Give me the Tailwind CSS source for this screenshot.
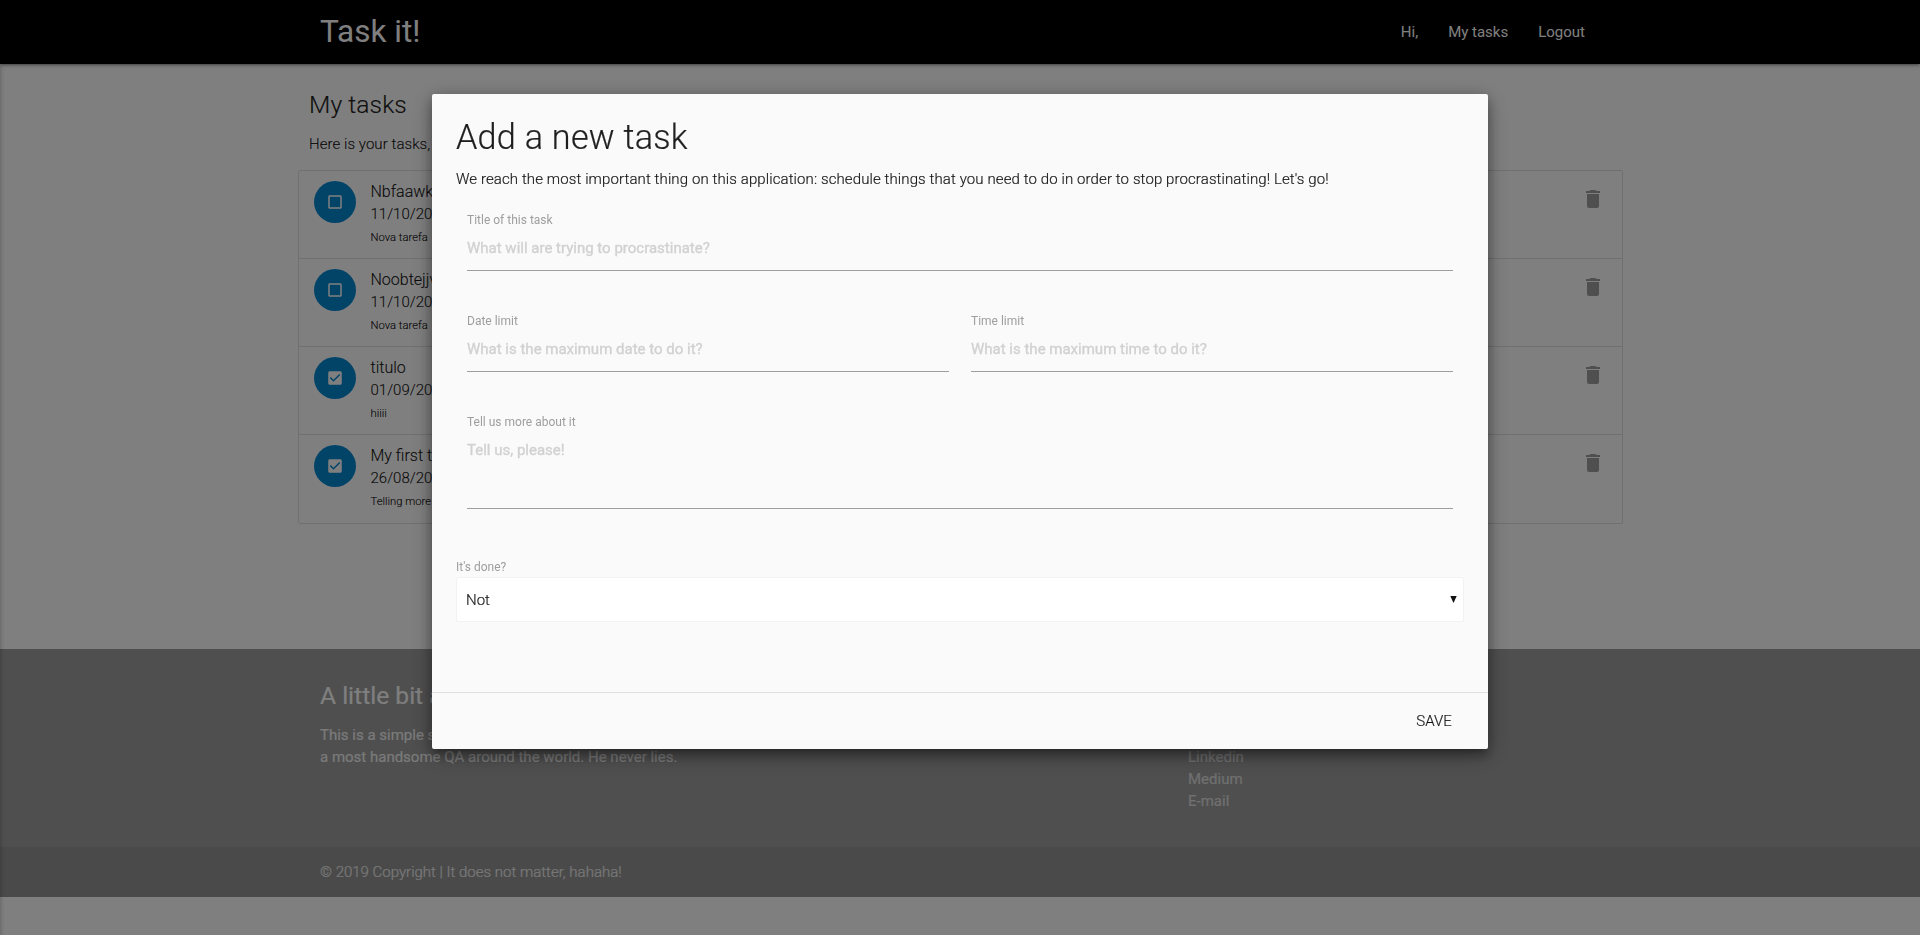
<!DOCTYPE html>
<html lang="en">
<head>
<meta charset="utf-8">
<title>Task it!</title>
<script src="https://cdn.jsdelivr.net/npm/@tailwindcss/browser@4"></script>
</head>
<body class="bg-white font-[Roboto,sans-serif] text-[15px] leading-[22px] text-black/87 h-[935px] overflow-hidden">

<svg class="hidden">
  <symbol id="box" viewBox="0 0 24 24"><path d="M19 5v14H5V5h14m0-2H5c-1.1 0-2 .9-2 2v14c0 1.1.9 2 2 2h14c1.1 0 2-.9 2-2V5c0-1.1-.9-2-2-2z"/></symbol>
  <symbol id="box-checked" viewBox="0 0 24 24"><path d="M19 3H5c-1.11 0-2 .9-2 2v14c0 1.1.89 2 2 2h14c1.11 0 2-.9 2-2V5c0-1.1-.89-2-2-2zm-9 14l-5-5 1.41-1.41L10 14.17l7.59-7.59L19 8l-9 9z"/></symbol>
  <symbol id="trash" viewBox="0 0 24 24"><path d="M6 19c0 1.100.9 2 2 2h8c1.100 0 2-.9 2-2V7H6v12zM19 4h-3.500l-1-1h-5l-1 1H5v2h14V4z"/></symbol>
</svg>

<header class="relative h-16 bg-black text-white shadow-[0_2px_2px_0_rgba(0,0,0,0.14),0_3px_1px_-2px_rgba(0,0,0,0.12),0_1px_5px_0_rgba(0,0,0,0.2)]">
  <div class="h-full pl-80 pr-[335px] flex items-center justify-between">
    <a class="text-[31.5px] leading-[64px]">Task it!</a>
    <nav class="flex gap-[30px]"><a>Hi,</a><a>My tasks</a><a>Logout</a></nav>
  </div>
</header>

<main class="h-[585px] pl-[298px] pr-[297px] pt-[27px] font-light [-webkit-text-stroke:0.2px]">
  <h5 class="pl-[11px] text-[24.6px] leading-[27px] tracking-[0.1px]">My tasks</h5>
  <p class="pl-[11px] mt-[15px] tracking-[0.06px]">Here is your tasks,</p>
  <ul class="mt-[15px] border border-[#e0e0e0] rounded-[2px] divide-y divide-[#e0e0e0]">
    <li class="h-[88px] flex pt-[10px] pl-[15px] pr-[17px]">
      <span class="size-[42px] shrink-0 rounded-full bg-[#0288d1] flex items-center justify-center"><svg class="size-[18px] fill-white"><use href="#box"/></svg></span>
      <div class="pl-[14.5px] flex-1"><div class="text-[16px]">Nbfaawk</div><div>11/10/2019</div><div class="text-[11.25px] leading-[26px]">Nova tarefa</div></div>
      <svg class="size-6 mt-1.5 fill-[#9e9e9e]"><use href="#trash"/></svg>
    </li>
    <li class="h-[88px] flex pt-[10px] pl-[15px] pr-[17px]">
      <span class="size-[42px] shrink-0 rounded-full bg-[#0288d1] flex items-center justify-center"><svg class="size-[18px] fill-white"><use href="#box"/></svg></span>
      <div class="pl-[14.5px] flex-1"><div class="text-[16px]">Noobtejjv</div><div>11/10/2019</div><div class="text-[11.25px] leading-[26px]">Nova tarefa</div></div>
      <svg class="size-6 mt-1.5 fill-[#9e9e9e]"><use href="#trash"/></svg>
    </li>
    <li class="h-[88px] flex pt-[10px] pl-[15px] pr-[17px]">
      <span class="size-[42px] shrink-0 rounded-full bg-[#0288d1] flex items-center justify-center"><svg class="size-[18px] fill-white"><use href="#box-checked"/></svg></span>
      <div class="pl-[14.5px] flex-1"><div class="text-[16px]">titulo</div><div>01/09/2019</div><div class="text-[11.25px] leading-[26px]">hiiii</div></div>
      <svg class="size-6 mt-1.5 fill-[#9e9e9e]"><use href="#trash"/></svg>
    </li>
    <li class="h-[88px] flex pt-[10px] pl-[15px] pr-[17px]">
      <span class="size-[42px] shrink-0 rounded-full bg-[#0288d1] flex items-center justify-center"><svg class="size-[18px] fill-white"><use href="#box-checked"/></svg></span>
      <div class="pl-[14.5px] flex-1"><div class="text-[16px]">My first task</div><div>26/08/2019</div><div class="text-[11.25px] leading-[26px]">Telling more</div></div>
      <svg class="size-6 mt-1.5 fill-[#9e9e9e]"><use href="#trash"/></svg>
    </li>
  </ul>
</main>

<footer class="bg-[#9e9e9e] text-white">
  <div class="h-[198px] pl-80 flex [-webkit-text-stroke:0.15px]">
    <div class="w-[868px] pt-[33px]">
      <h5 class="text-[24.6px] leading-[27px]">A little bit about</h5>
      <p class="mt-[15px] text-[#f5f5f5]">This is a simple site by<br>a most handsome QA around the world. He never lies.</p>
    </div>
    <ul class="pt-[97px] text-[#e0e0e0]"><li>Linkedin</li><li>Medium</li><li>E-mail</li></ul>
  </div>
  <div class="h-[50px] pl-80 bg-[rgba(51,51,51,0.08)] text-white/80 font-light leading-[50px] [-webkit-text-stroke:0.2px]">© 2019 Copyright | It does not matter, hahaha!</div>
</footer>

<!-- edge shadow of the closed side navigation -->
<div class="fixed top-[60px] bottom-[-10px] -left-2.5 w-2.5 bg-white shadow-[0_0_5px_0_rgba(0,0,0,0.3)]"></div>

<div class="fixed inset-0 bg-black/50"></div>

<section class="fixed left-[432px] top-[94px] w-[1056px] h-[655px] rounded-[2px] bg-[#fafafa] font-light shadow-[0_8px_10px_1px_rgba(0,0,0,0.14),0_3px_14px_2px_rgba(0,0,0,0.12),0_5px_5px_-3px_rgba(0,0,0,0.2),0_6px_22px_0_rgba(0,0,0,0.3)] flex flex-col [-webkit-text-stroke:0.2px]">
  <div class="h-[598px] px-6 pt-6">
    <h4 class="text-[34.2px] leading-[38px] tracking-[0.25px]">Add a new task</h4>
    <p class="mt-3 tracking-[0.105px]">We reach the most important thing on this application: schedule things that you need to do in order to stop procrastinating! Let's go!</p>
    <form class="mt-[21px]">
      <div class="px-[11px] grid grid-cols-2 gap-x-[22px] font-normal text-[#d1d1d1]">
        <div class="col-span-2 h-[101px]">
          <label class="block h-[15px] text-xs leading-[18px] text-[#9e9e9e] [-webkit-text-stroke:0]">Title of this task</label>
          <div class="h-[45px] leading-[44px] border-b border-[#9e9e9e] [-webkit-text-stroke:0.35px]">What will are trying to procrastinate?</div>
        </div>
        <div class="h-[101px]">
          <label class="block h-[15px] text-xs leading-[18px] text-[#9e9e9e] [-webkit-text-stroke:0]">Date limit</label>
          <div class="h-[45px] leading-[44px] border-b border-[#9e9e9e] [-webkit-text-stroke:0.35px]">What is the maximum date to do it?</div>
        </div>
        <div class="h-[101px]">
          <label class="block h-[15px] text-xs leading-[18px] text-[#9e9e9e] [-webkit-text-stroke:0]">Time limit</label>
          <div class="h-[45px] leading-[44px] border-b border-[#9e9e9e] [-webkit-text-stroke:0.35px]">What is the maximum time to do it?</div>
        </div>
        <div class="col-span-2">
          <label class="block h-[15px] text-xs leading-[18px] text-[#9e9e9e] [-webkit-text-stroke:0]">Tell us more about it</label>
          <div class="h-[81px] leading-[44px] border-b border-[#9e9e9e] [-webkit-text-stroke:0.35px]">Tell us, please!</div>
        </div>
      </div>
      <label class="block mt-[49px] text-xs leading-[18px] font-normal text-[#9e9e9e] [-webkit-text-stroke:0]">It's done?</label>
      <div class="mt-px h-[45px] pl-[9px] pr-[6px] flex items-center justify-between border border-[#f2f2f2] rounded-[2px] bg-white">
        <span>Not</span>
        <svg class="w-[7px] h-[7px] mb-px fill-[#111]" viewBox="0 0 7 7"><path d="M.3 0h6.400L3.500 7z"/></svg>
      </div>
    </form>
  </div>
  <div class="h-[57px] border-t border-black/10 pl-6 pr-[36px] flex items-center justify-end"><span class="tracking-[0.1px]">SAVE</span></div>
</section>
</body>
</html>
